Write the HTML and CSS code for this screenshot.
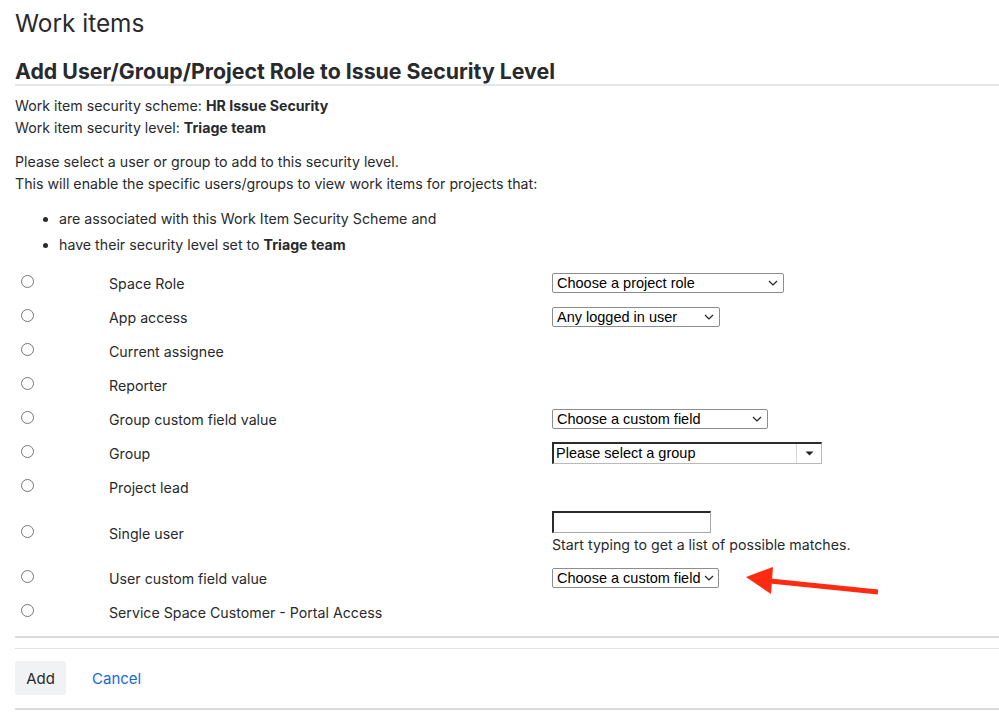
FILE: index.html
```html
<!DOCTYPE html>
<html>
<head>
<meta charset="utf-8">
<link rel="stylesheet" href="styles.css">
</head>
<body>
<div class="page">
  <h1 class="title">Work items</h1>
  <h2 class="heading">Add User/Group/Project Role to Issue Security Level</h2>
  <div class="info">
    <div>Work item security scheme: <b>HR Issue Security</b></div>
    <div>Work item security level: <b>Triage team</b></div>
  </div>
  <div class="info intro">
    <div>Please select a user or group to add to this security level.</div>
    <div>This will enable the specific users/groups to view work items for projects that:</div>
  </div>
  <ul class="bullets">
    <li>are associated with this Work Item Security Scheme and</li>
    <li>have their security level set to <b>Triage team</b></li>
  </ul>

  <div class="options">
    <div class="row">
      <div class="radio-cell"><input type="radio" name="t"></div>
      <div class="label">Space Role</div>
      <div class="control"><div class="select w232"><span>Choose a project role</span><svg class="chev" width="10" height="6" viewBox="0 0 10 6"><path d="M1 1 L5 5 L9 1" fill="none" stroke="#222" stroke-width="1.2"/></svg></div></div>
    </div>
    <div class="row">
      <div class="radio-cell"><input type="radio" name="t"></div>
      <div class="label">App access</div>
      <div class="control"><div class="select w168"><span>Any logged in user</span><svg class="chev" width="10" height="6" viewBox="0 0 10 6"><path d="M1 1 L5 5 L9 1" fill="none" stroke="#222" stroke-width="1.2"/></svg></div></div>
    </div>
    <div class="row">
      <div class="radio-cell"><input type="radio" name="t"></div>
      <div class="label">Current assignee</div>
      <div class="control"></div>
    </div>
    <div class="row">
      <div class="radio-cell"><input type="radio" name="t"></div>
      <div class="label">Reporter</div>
      <div class="control"></div>
    </div>
    <div class="row">
      <div class="radio-cell"><input type="radio" name="t"></div>
      <div class="label">Group custom field value</div>
      <div class="control"><div class="select w216"><span>Choose a custom field</span><svg class="chev" width="10" height="6" viewBox="0 0 10 6"><path d="M1 1 L5 5 L9 1" fill="none" stroke="#222" stroke-width="1.2"/></svg></div></div>
    </div>
    <div class="row">
      <div class="radio-cell"><input type="radio" name="t"></div>
      <div class="label">Group</div>
      <div class="control"><div class="picker"><span class="picker-text">Please select a group</span><span class="picker-btn"><svg width="9" height="5" viewBox="0 0 9 5"><path d="M0.5 0.5 L8.5 0.5 L4.5 4.5 Z" fill="#222"/></svg></span></div></div>
    </div>
    <div class="row lead">
      <div class="radio-cell"><input type="radio" name="t"></div>
      <div class="label">Project lead</div>
      <div class="control"></div>
    </div>
    <div class="row tall">
      <div class="radio-cell"><input type="radio" name="t"></div>
      <div class="label">Single user</div>
      <div class="control stack">
        <div class="textinput"></div>
        <div class="help">Start typing to get a list of possible matches.</div>
      </div>
    </div>
    <div class="row">
      <div class="radio-cell"><input type="radio" name="t"></div>
      <div class="label">User custom field value</div>
      <div class="control"><div class="select w167"><span>Choose a custom field</span><svg class="chev" width="10" height="6" viewBox="0 0 10 6"><path d="M1 1 L5 5 L9 1" fill="none" stroke="#222" stroke-width="1.2"/></svg></div></div>
    </div>
    <div class="row">
      <div class="radio-cell"><input type="radio" name="t"></div>
      <div class="label">Service Space Customer - Portal Access</div>
      <div class="control"></div>
    </div>
  </div>

  <div class="footer">
    <div class="buttons">
      <button class="btn">Add</button>
      <a class="cancel" href="#">Cancel</a>
    </div>
  </div>
</div>
<svg class="arrow" width="150" height="50" viewBox="740 560 150 50">
  <line x1="770" y1="581" x2="878" y2="592" stroke="#ff2a12" stroke-width="5"/>
  <polygon points="746,577 773,567 771,594" fill="#ff2a12"/>
</svg>
</body>
</html>
```

FILE: styles.css
```css
html, body {
  margin: 0;
  padding: 0;
  background: #fff;
}
body {
  font-family: Inter, "Noto Sans", sans-serif;
  color: #292a2e;
  font-size: 14.2px;
  position: relative;
}
.page {
  padding: 8px 0 0 15px;
}
.title {
  margin: 0;
  font-size: 24.4px;
  font-weight: 400;
  line-height: 30px;
}
.heading {
  margin: 20px 0 0 0;
  font-size: 21.3px;
  font-weight: 700;
  line-height: 26px;
  padding-bottom: 0;
  border-bottom: 2px solid #e6e7e9;
}
.info {
  margin-top: 9px;
  line-height: 22px;
}
.info b { font-weight: 700; }
.intro {
  margin-top: 12px;
}
.bullets {
  margin: 11px 0 0 0;
  padding-left: 44px;
  line-height: 26px;
}
.options {
  margin-top: 8px;
}
.row {
  display: flex;
  align-items: center;
  height: 34px;
}
.row.lead {
  height: 35px;
}
.row.tall {
  height: 56px;
}
.radio-cell {
  width: 94px;
  display: flex;
  align-items: center;
  height: 100%;
}
.radio-cell input {
  margin: 0 0 4px 6px;
  width: 13px;
  height: 13px;
}
.label {
  width: 443px;
}
.control {
  flex: 1;
  display: flex;
  align-items: center;
}
.control.stack {
  flex-direction: column;
  align-items: flex-start;
}
.select {
  box-sizing: border-box;
  height: 20px;
  border: 1px solid #8d8d8d;
  border-radius: 2px;
  display: flex;
  align-items: center;
  justify-content: space-between;
  gap: 4px;
  padding: 0 5px 0 4px;
  font-family: "Liberation Sans", Arial, sans-serif;
  font-size: 14.5px;
  color: #000;
  background: #fff;
  white-space: nowrap;
}
.chev { display: block; flex: none; }
.w232 { width: 232px; }
.w168 { width: 168px; }
.w216 { width: 216px; }
.w167 { width: 167px; }
.picker {
  box-sizing: border-box;
  width: 270px;
  height: 22px;
  display: flex;
  border-top: 2px solid #2b2b2b;
  border-left: 2px solid #2b2b2b;
  border-right: 1px solid #b9b9b9;
  border-bottom: 1px solid #b9b9b9;
  font-family: "Liberation Sans", Arial, sans-serif;
  font-size: 14.5px;
  color: #000;
}
.picker-text {
  flex: 1;
  padding-left: 2px;
  line-height: 19px;
}
.picker-btn {
  width: 24px;
  border-left: 1px solid #d6d6d6;
  display: flex;
  align-items: center;
  justify-content: center;
}
.textinput {
  box-sizing: border-box;
  width: 159px;
  height: 22px;
  border-top: 2px solid #2b2b2b;
  border-left: 2px solid #2b2b2b;
  border-right: 1px solid #a8a8a8;
  border-bottom: 1px solid #a8a8a8;
}
.help {
  margin-top: 1px;
  line-height: 22px;
}
.footer {
  margin-top: 7px;
  border-top: 2px solid #dcdcdc;
}
.buttons {
  margin-top: 10px;
  border-top: 1px solid #e2e2e2;
  border-bottom: 2px solid #dcdcdc;
  padding: 12px 0 13px 0;
  display: flex;
  align-items: center;
}
.btn {
  width: 51px;
  height: 34px;
  border: none;
  border-radius: 3px;
  background: #f1f2f4;
  color: #292a2e;
  font-family: Inter, "Noto Sans", sans-serif;
  font-size: 15px;
  padding: 0;
}
.cancel {
  margin-left: 26px;
  color: #1868db;
  text-decoration: none;
  font-size: 15px;
}
.arrow {
  position: absolute;
  left: 740px;
  top: 560px;
}
```
